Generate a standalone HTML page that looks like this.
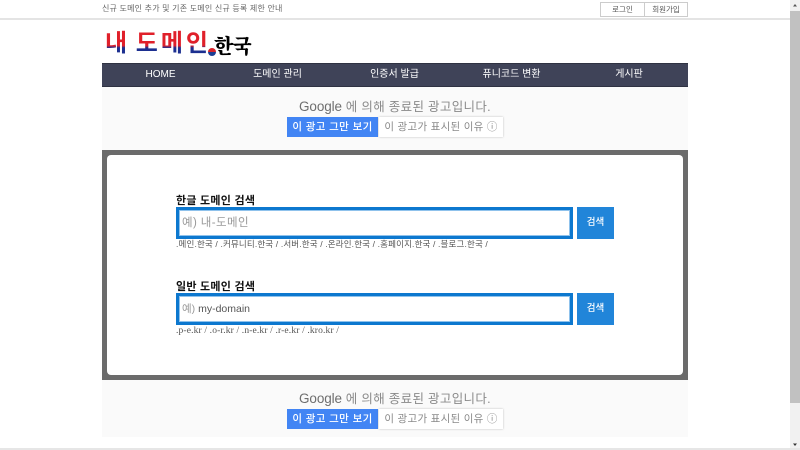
<!DOCTYPE html>
<html lang="ko"><head><meta charset="utf-8"><title>내도메인.한국</title>
<style>
html,body{margin:0;padding:0;width:800px;height:450px;overflow:hidden;background:#fff}
body{font-family:"Liberation Sans","Noto Sans CJK KR",sans-serif;position:relative}
.a{position:absolute;white-space:nowrap}
.nav{color:#fff;font-size:10px;top:63px;height:24px;line-height:24px;text-align:center;font-weight:400}
.ad{left:102px;width:586px;background:#fafafa}
.adt{left:102px;width:586px;text-align:center;font-size:12.5px;color:#8a8a8a;letter-spacing:.32px}
.adt b{font-weight:400;color:#6e6e6e;font-size:13.5px;letter-spacing:-.1px}
.b1{left:287px;width:91px;height:20px;line-height:20px;background:#4285f4;color:#fff;font-size:10.5px;text-align:center;font-weight:500;letter-spacing:.4px}
.b2{left:379px;width:124px;height:20px;line-height:20px;background:#fff;color:#8a8a8a;font-size:10.5px;text-align:center;box-shadow:0 0 2px rgba(0,0,0,.25);letter-spacing:.3px}
.lab{left:176px;font-size:11px;font-weight:700;color:#111;line-height:14px;letter-spacing:.25px}
.inp{left:176px;width:388px;height:26px;border:3px solid #0d78cf;background:#fff;font-size:11px;line-height:27px;padding-left:3px;box-sizing:content-box;box-shadow:inset 0 0 0 1px #8fc2ec}
.btn{left:577px;width:37px;height:32px;line-height:32px;background:#2185d9;color:#fff;font-size:9.5px;text-align:center;font-weight:500}
.sub{left:176px;font-size:8.5px;color:#555;line-height:12px;letter-spacing:.15px}
</style></head><body>
<div class="a" style="left:102px;top:2px;font-size:8px;line-height:13px;color:#666;letter-spacing:.2px">신규 도메인 추가 및 기존 도메인 신규 등록 제한 안내</div>
<div class="a" style="left:0;top:18px;width:790px;height:2px;background:#e4e4e4"></div>
<div class="a" style="left:600px;top:2px;width:43px;height:13px;border:1px solid #ccc;font-size:7.5px;line-height:13px;text-align:center;color:#555">로그인</div>
<div class="a" style="left:644px;top:2px;width:42px;height:13px;border:1px solid #ccc;font-size:7.5px;line-height:13px;text-align:center;color:#555">회원가입</div>

<div class="a" style="left:105px;top:28px;font-size:24px;line-height:32px;font-weight:700;letter-spacing:3px;word-spacing:-4px;background:linear-gradient(#e0202a 0,#e0202a 55%,#1c2f90 62%,#1c2f90 100%);-webkit-background-clip:text;background-clip:text;color:transparent">내 도메인</div>
<div class="a" style="left:208px;top:48px;width:8px;height:8px;border-radius:50%;background:linear-gradient(#d8232a 50%,#1c3f94 50%)"></div>
<div class="a" style="left:214px;top:31px;font-family:'Noto Serif CJK SC','Noto Sans CJK KR',serif;font-size:20px;line-height:28px;font-weight:900;color:#000;letter-spacing:-1px">한국</div>

<div class="a" style="left:102px;top:63px;width:586px;height:24px;background:#3f4358;border-top:1px solid #2f3242;border-bottom:1px solid #2f3242;box-sizing:border-box"></div>
<div class="a nav" style="left:102px;width:117px">HOME</div>
<div class="a nav" style="left:219px;width:117px">도메인 관리</div>
<div class="a nav" style="left:336px;width:117px">인증서 발급</div>
<div class="a nav" style="left:453px;width:117px">퓨니코드 변환</div>
<div class="a nav" style="left:570px;width:118px">게시판</div>

<div class="a ad" style="top:87px;height:63px"></div>
<div class="a adt" style="top:98px;line-height:18px"><b>Google</b> 에 의해 종료된 광고입니다.</div>
<div class="a b1" style="top:117px">이 광고 그만 보기</div>
<div class="a b2" style="top:117px">이 광고가 표시된 이유 ⓘ</div>

<div class="a" style="left:102px;top:150px;width:586px;height:230px;background:#6b6b6b"></div>
<div class="a" style="left:107px;top:155px;width:576px;height:220px;background:#fff;border-radius:4px"></div>

<div class="a lab" style="top:194px">한글 도메인 검색</div>
<div class="a inp" style="top:207px;color:#999;font-size:11.5px;letter-spacing:.4px">예) 내-도메인</div>
<div class="a btn" style="top:207px">검색</div>
<div class="a sub" style="top:238px">.메인.한국 / .커뮤니티.한국 / .서버.한국 / .온라인.한국 / .홈페이지.한국 / .블로그.한국 /</div>

<div class="a lab" style="top:280px">일반 도메인 검색</div>
<div class="a inp" style="top:293px;color:#555;font-size:10.5px"><span style="color:#999">예)</span> my-domain</div>
<div class="a btn" style="top:293px">검색</div>
<div class="a sub" style="top:325px;font-family:'Liberation Serif','Noto Sans CJK KR',serif;font-size:9.5px;letter-spacing:.15px">.p-e.kr / .o-r.kr / .n-e.kr / .r-e.kr / .kro.kr /</div>

<div class="a ad" style="top:380px;height:57px"></div>
<div class="a adt" style="top:390px;line-height:18px"><b>Google</b> 에 의해 종료된 광고입니다.</div>
<div class="a b1" style="top:409px">이 광고 그만 보기</div>
<div class="a b2" style="top:409px">이 광고가 표시된 이유 ⓘ</div>

<div class="a" style="left:790px;top:0;width:10px;height:450px;background:#f1f1f1"></div>
<div class="a" style="left:790px;top:11px;width:10px;height:392px;background:#c1c1c1"></div>
<svg class="a" style="left:790px;top:0" width="10" height="450"><path d="M3 6.500h4L5 4z" fill="#555"/><path d="M3 443.500h4L5 446z" fill="#333"/></svg>
<div class="a" style="left:0;top:448px;width:800px;height:2px;background:#e6e6e6"></div>
</body></html>
